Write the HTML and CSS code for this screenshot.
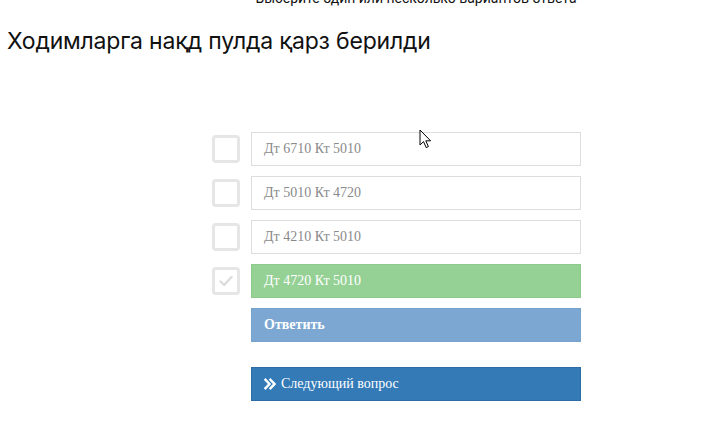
FILE: index.html
```html
<!DOCTYPE html>
<html>
<head>
<meta charset="utf-8">
<link rel="stylesheet" href="styles.css">
</head>
<body>
<div class="page">
  <div class="hint-row"><div class="hint">Выберите один или несколько вариантов ответа</div></div>
  <h1 class="title">Ходимларга нақд пулда қарз берилди</h1>
  <div class="quiz">
    <div class="option">
      <span class="check"></span>
      <div class="answer">Дт 6710 Кт 5010</div>
    </div>
    <div class="option">
      <span class="check"></span>
      <div class="answer">Дт 5010 Кт 4720</div>
    </div>
    <div class="option">
      <span class="check"></span>
      <div class="answer">Дт 4210 Кт 5010</div>
    </div>
    <div class="option">
      <span class="check checked">
        <svg viewBox="0 0 16 16" width="16" height="16"><path d="M2.5 8.5 L6.2 12 L13.5 4" fill="none" stroke="#dcdcdc" stroke-width="2.4" stroke-linecap="round" stroke-linejoin="round"/></svg>
      </span>
      <div class="answer correct">Дт 4720 Кт 5010</div>
    </div>
    <div class="option">
      <span class="spacer"></span>
      <button class="btn btn-answer">Ответить</button>
    </div>
    <div class="option next-row">
      <span class="spacer"></span>
      <button class="btn btn-next">
        <svg class="chev" viewBox="0 0 12 12" width="12" height="12"><path d="M1.5 1.8 L5.5 6 L1.5 10.2 M6.5 1.8 L10.5 6 L6.5 10.2" fill="none" stroke="#fff" stroke-width="2.4" stroke-linecap="square"/></svg>
        Следующий вопрос
      </button>
    </div>
  </div>
  <svg class="cursor" viewBox="0 0 13 20" width="13" height="20"><path d="M1 1 L1 16 L4.5 12.6 L7.2 18.6 L9.4 17.6 L6.8 11.8 L11.6 11.8 Z" fill="#fff" stroke="#000" stroke-width="1" stroke-linejoin="miter"/></svg>
</div>
</body>
</html>
```
FILE: styles.css
```css
html, body {
  margin: 0;
  padding: 0;
  background: #fff;
}
.page {
  position: relative;
  width: 704px;
  height: 426px;
  overflow: hidden;
  font-family: Inter, "Noto Sans", sans-serif;
}
.hint-row {
  padding-left: 251px;
  margin-top: -10px;
}
.hint {
  width: 330px;
  text-align: center;
  font-family: Roboto, "Noto Sans", sans-serif;
  font-size: 14px;
  line-height: 17px;
  white-space: nowrap;
  color: #111;
}
.title {
  margin: 20px 0 0 7px;
  font-weight: 400;
  font-size: 23px;
  line-height: 28px;
  color: #111;
  letter-spacing: -0.2px;
}
.quiz {
  margin: 77px 0 0 212px;
  display: flex;
  flex-direction: column;
  gap: 10px;
  font-family: "Liberation Serif", serif;
  font-size: 14px;
}
.option {
  display: flex;
  align-items: center;
  gap: 11px;
}
.check, .spacer {
  width: 28px;
  height: 28px;
  box-sizing: border-box;
  flex: none;
}
.check {
  border: 3px solid #e6e6e6;
  border-radius: 4px;
  display: flex;
  align-items: center;
  justify-content: center;
}
.answer, .btn {
  width: 330px;
  height: 34px;
  box-sizing: border-box;
  border: 1px solid #dddddd;
  padding: 0 12px;
  display: flex;
  align-items: center;
  color: #8a8a8a;
  background: #fff;
  font-family: "Liberation Serif", serif;
  font-size: 14px;
}
.answer.correct {
  background: #95d195;
  border-color: #8ccb8c;
  color: #fff;
}
.btn {
  color: #fff;
  font-weight: bold;
  text-align: left;
  cursor: pointer;
}
.btn-answer {
  background: #7ba7d2;
  border-color: #75a2cf;
}
.next-row {
  margin-top: 15px;
}
.btn-next {
  background: #337ab7;
  border-color: #2e6da4;
  font-weight: normal;
  gap: 5px;
}
.chev {
  flex: none;
}
.cursor {
  position: absolute;
  left: 419px;
  top: 129px;
}
```
